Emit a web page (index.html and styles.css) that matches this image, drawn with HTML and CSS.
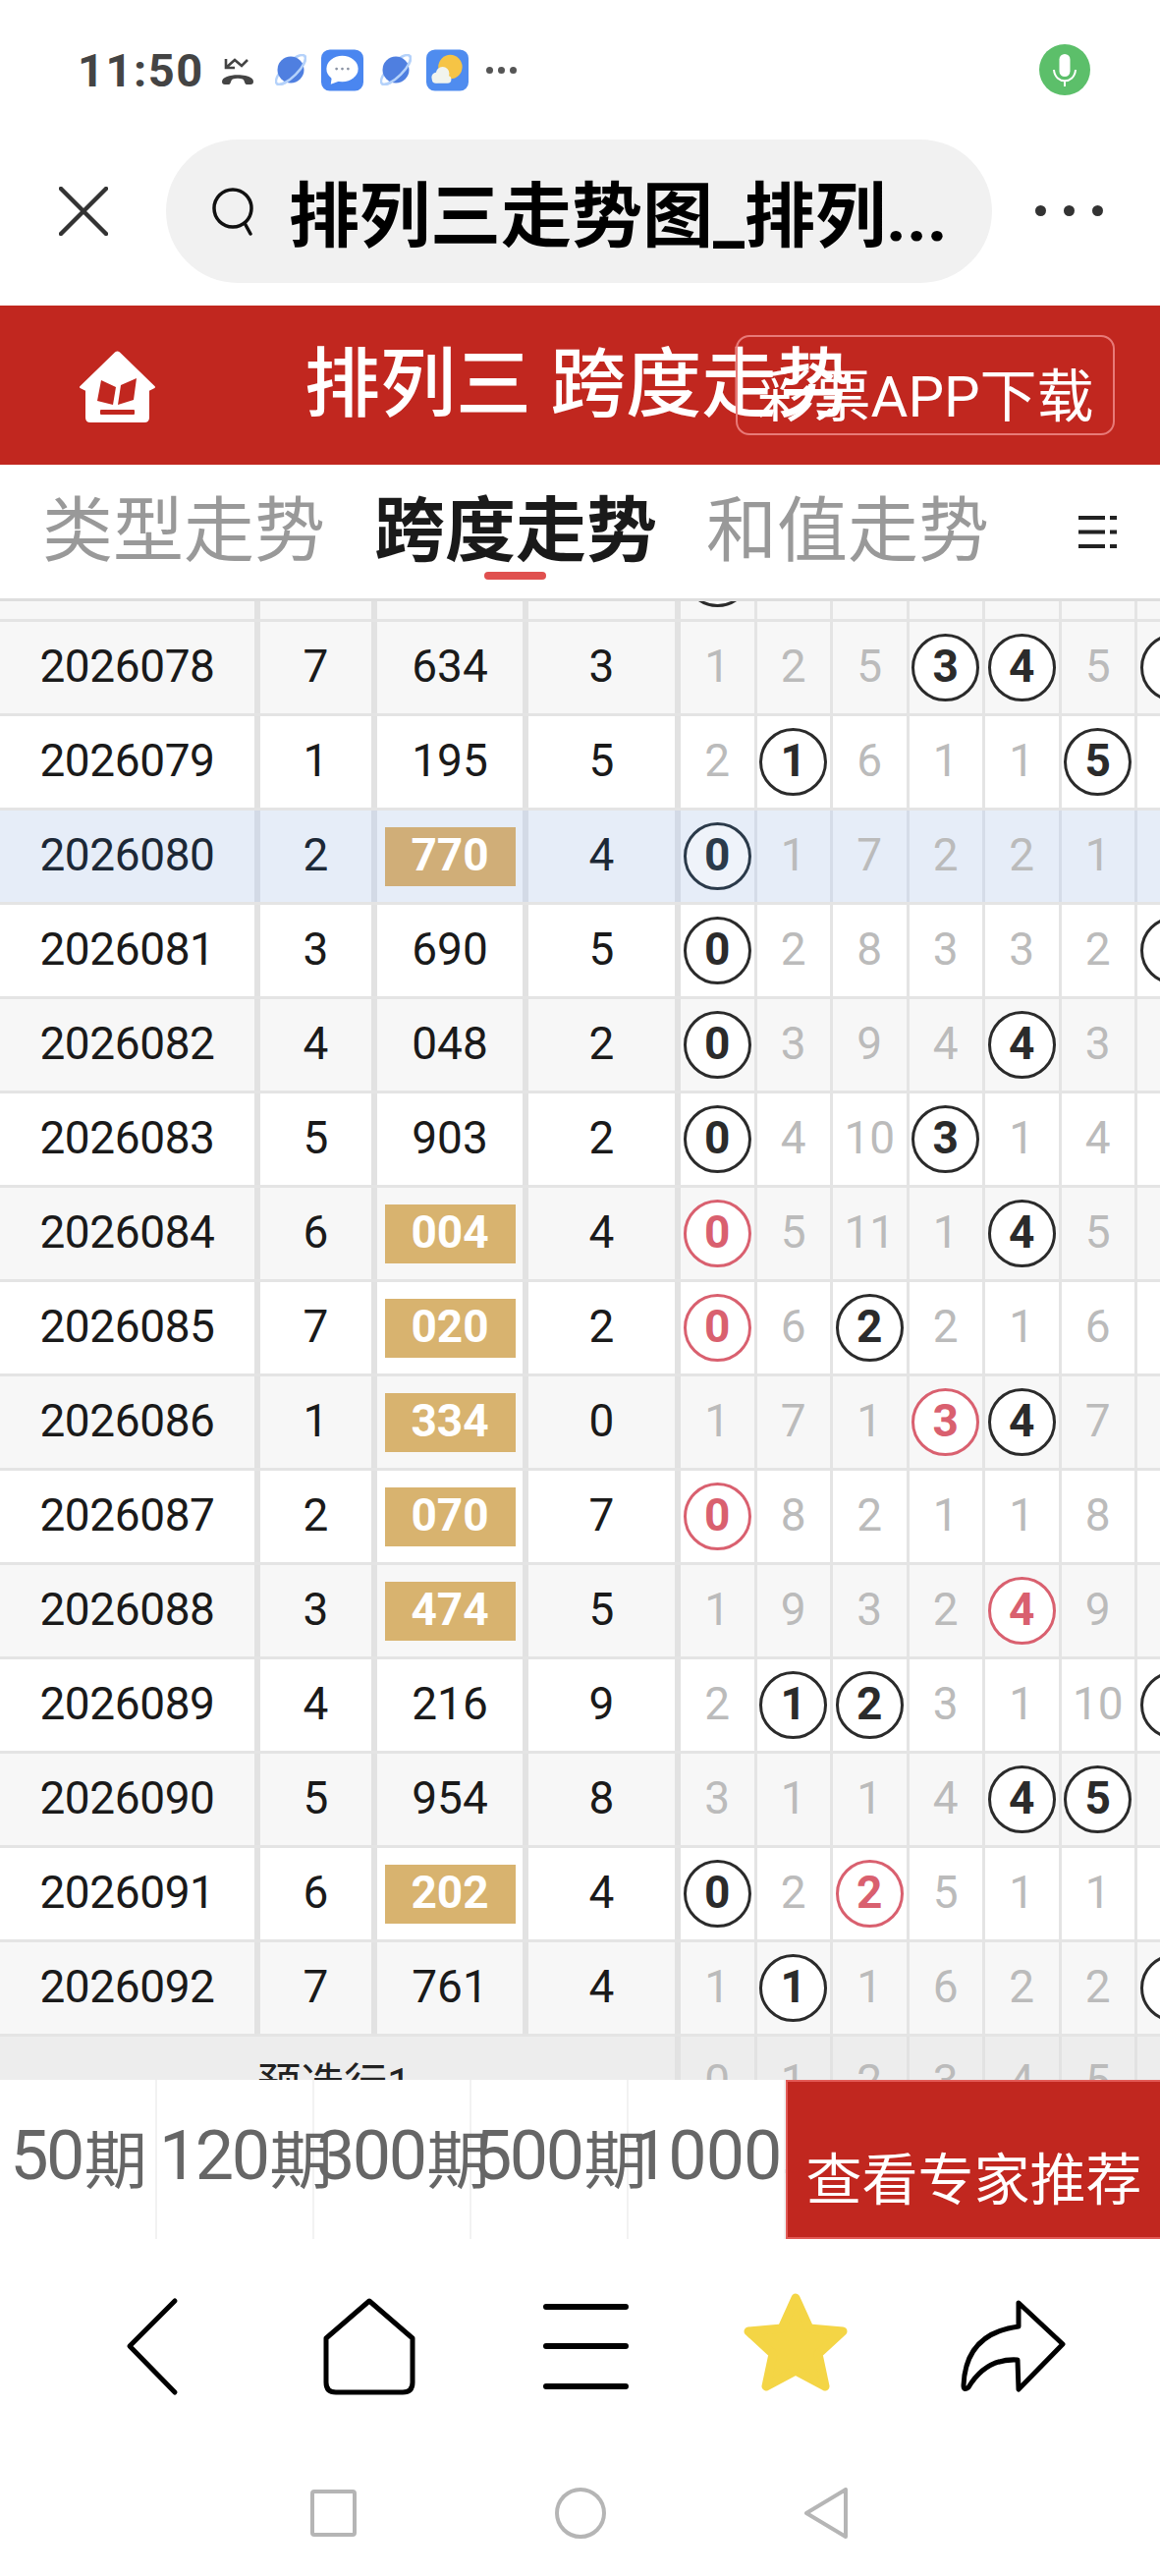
FILE: index.html
```html
<!DOCTYPE html>
<html lang="zh-CN">
<head>
<meta charset="utf-8">
<title>排列三 跨度走势</title>
<link rel="stylesheet" href="styles.css">
</head>
<body>
<div class="phone">
  <div class="status">
    <span class="clock">11:50</span>
    <svg class="si-call" viewBox="0 0 34 28"><path d="M7 2v9h9M7 11L16 3l7 6 6-6" transform="translate(-2 0)" fill="none" stroke="#444" stroke-width="2.600"/><path d="M1 25c0-9 32-9 32 0 0 2-1 3-3 3h-4c-2 0-2-5-4-5.500-3-1-7-1-10 0C10 23 10 28 8 28H4c-2 0-3-1-3-3z" fill="#444"/></svg>
    <svg class="si-planet" viewBox="0 0 32 32"><g transform="translate(16 16) rotate(-45)"><ellipse rx="20" ry="7" fill="none" stroke="#b5d2fa" stroke-width="2.500"/></g><circle cx="16" cy="16" r="13.500" fill="#4f7fe0"/><g transform="translate(16 16) rotate(-45)"><path d="M-20 0A20 7 0 0 0 20 0" fill="none" stroke="#b5d2fa" stroke-width="2.500"/></g></svg>
    <svg class="si-tile" viewBox="0 0 44 43"><rect width="44" height="43" rx="9" fill="#4a86f0"/><ellipse cx="22" cy="20" rx="16.500" ry="13.500" fill="#fff"/><path d="M11 29l-1 7 11-4z" fill="#fff"/><circle cx="16" cy="20" r="1.400" fill="#8b93a3"/><circle cx="22" cy="20" r="1.400" fill="#8b93a3"/><circle cx="28" cy="20" r="1.400" fill="#8b93a3"/></svg>
    <svg class="si-planet" viewBox="0 0 32 32"><g transform="translate(16 16) rotate(-45)"><ellipse rx="20" ry="7" fill="none" stroke="#b5d2fa" stroke-width="2.500"/></g><circle cx="16" cy="16" r="13.500" fill="#4f7fe0"/><g transform="translate(16 16) rotate(-45)"><path d="M-20 0A20 7 0 0 0 20 0" fill="none" stroke="#b5d2fa" stroke-width="2.500"/></g></svg>
    <svg class="si-tile" viewBox="0 0 44 43"><rect width="44" height="43" rx="9" fill="#4f8cef"/><circle cx="25" cy="18" r="12.500" fill="#f6c445"/><circle cx="11" cy="29" r="5.500" fill="#f1f4ee"/><circle cx="17" cy="25" r="7" fill="#f1f4ee"/><rect x="6" y="27" width="20" height="8" rx="4" fill="#f1f4ee"/></svg>
    <span class="st-dots"><i></i><i></i><i></i></span>
    <svg class="si-mic" viewBox="0 0 52 52"><circle cx="26" cy="26" r="26" fill="#5cbf6a"/><rect x="20.500" y="10" width="11" height="23" rx="5.500" fill="#fff"/><path d="M15 26c1 15 21 15 22 0M26 37v6" fill="none" stroke="#fff" stroke-width="2"/></svg>
  </div>

  <div class="addr">
    <svg class="a-close" viewBox="0 0 50 50"><path d="M2 2l46 46M48 2L2 48" stroke="#333" stroke-width="4.500" stroke-linecap="round"/></svg>
    <div class="a-search">
      <svg class="a-glass" viewBox="0 0 46 50"><circle cx="22" cy="22" r="19" fill="none" stroke="#111" stroke-width="3.500"/><path d="M34 37l6 11" stroke="#111" stroke-width="3.500" stroke-linecap="round"/></svg>
      <span class="a-title">排列三走势图_排列...</span>
    </div>
    <span class="a-more"><i></i><i></i><i></i></span>
  </div>

  <header class="head">
    <svg class="h-logo" viewBox="0 0 120 100"><path d="M58 17L22 52l6 3v28q0 4 4 4h55q4 0 4-4V55l6-3L61 17q-1.500-1-3 0z" fill="#fff" stroke="#fff" stroke-width="2" stroke-linejoin="round"/><path d="M43 45l15 7-3 18-16-4zM63 50l16-7-3 22-16 5z" fill="#c1271f"/><rect x="42" y="75" width="35" height="5" rx="1" fill="#c1271f"/></svg>
    <h1 class="h-title">排列三 跨度走势</h1>
    <a class="h-app">彩票APP下载</a>
  </header>

  <nav class="tabs">
    <span class="tab">类型走势</span>
    <span class="tab on">跨度走势</span>
    <span class="tab">和值走势</span>
    <svg class="t-menu" viewBox="0 0 39 33"><path d="M0 2h27M32 2h7M0 16.500h27M32 16.500h7M0 31h27M32 31h7" stroke="#222" stroke-width="4"/></svg>
  </nav>

  <main class="table">
    <div class="row r-first alt"><span class="p"></span><span class="a"></span><span class="b"></span><span class="c"></span><span class="n"><b class="ball">0</b></span><span class="n"></span><span class="n"></span><span class="n"></span><span class="n"></span><span class="n"></span><span class="n"></span></div>
    <div class="row alt"><span class="p">2026078</span><span class="a">7</span><span class="b">634</span><span class="c">3</span><span class="n">1</span><span class="n">2</span><span class="n">5</span><span class="n"><b class="ball">3</b></span><span class="n"><b class="ball">4</b></span><span class="n">5</span><span class="n"><b class="ball">6</b></span></div>
    <div class="row"><span class="p">2026079</span><span class="a">1</span><span class="b">195</span><span class="c">5</span><span class="n">2</span><span class="n"><b class="ball">1</b></span><span class="n">6</span><span class="n">1</span><span class="n">1</span><span class="n"><b class="ball">5</b></span><span class="n">1</span></div>
    <div class="row hl"><span class="p">2026080</span><span class="a">2</span><span class="b"><em class="tag">770</em></span><span class="c">4</span><span class="n"><b class="ball">0</b></span><span class="n">1</span><span class="n">7</span><span class="n">2</span><span class="n">2</span><span class="n">1</span><span class="n">2</span></div>
    <div class="row"><span class="p">2026081</span><span class="a">3</span><span class="b">690</span><span class="c">5</span><span class="n"><b class="ball">0</b></span><span class="n">2</span><span class="n">8</span><span class="n">3</span><span class="n">3</span><span class="n">2</span><span class="n"><b class="ball">6</b></span></div>
    <div class="row alt"><span class="p">2026082</span><span class="a">4</span><span class="b">048</span><span class="c">2</span><span class="n"><b class="ball">0</b></span><span class="n">3</span><span class="n">9</span><span class="n">4</span><span class="n"><b class="ball">4</b></span><span class="n">3</span><span class="n">1</span></div>
    <div class="row"><span class="p">2026083</span><span class="a">5</span><span class="b">903</span><span class="c">2</span><span class="n"><b class="ball">0</b></span><span class="n">4</span><span class="n">10</span><span class="n"><b class="ball">3</b></span><span class="n">1</span><span class="n">4</span><span class="n">2</span></div>
    <div class="row alt"><span class="p">2026084</span><span class="a">6</span><span class="b"><em class="tag">004</em></span><span class="c">4</span><span class="n"><b class="ball red">0</b></span><span class="n">5</span><span class="n">11</span><span class="n">1</span><span class="n"><b class="ball">4</b></span><span class="n">5</span><span class="n">3</span></div>
    <div class="row"><span class="p">2026085</span><span class="a">7</span><span class="b"><em class="tag">020</em></span><span class="c">2</span><span class="n"><b class="ball red">0</b></span><span class="n">6</span><span class="n"><b class="ball">2</b></span><span class="n">2</span><span class="n">1</span><span class="n">6</span><span class="n">4</span></div>
    <div class="row alt"><span class="p">2026086</span><span class="a">1</span><span class="b"><em class="tag">334</em></span><span class="c">0</span><span class="n">1</span><span class="n">7</span><span class="n">1</span><span class="n"><b class="ball red">3</b></span><span class="n"><b class="ball">4</b></span><span class="n">7</span><span class="n">5</span></div>
    <div class="row"><span class="p">2026087</span><span class="a">2</span><span class="b"><em class="tag">070</em></span><span class="c">7</span><span class="n"><b class="ball red">0</b></span><span class="n">8</span><span class="n">2</span><span class="n">1</span><span class="n">1</span><span class="n">8</span><span class="n">6</span></div>
    <div class="row alt"><span class="p">2026088</span><span class="a">3</span><span class="b"><em class="tag">474</em></span><span class="c">5</span><span class="n">1</span><span class="n">9</span><span class="n">3</span><span class="n">2</span><span class="n"><b class="ball red">4</b></span><span class="n">9</span><span class="n">7</span></div>
    <div class="row"><span class="p">2026089</span><span class="a">4</span><span class="b">216</span><span class="c">9</span><span class="n">2</span><span class="n"><b class="ball">1</b></span><span class="n"><b class="ball">2</b></span><span class="n">3</span><span class="n">1</span><span class="n">10</span><span class="n"><b class="ball">9</b></span></div>
    <div class="row alt"><span class="p">2026090</span><span class="a">5</span><span class="b">954</span><span class="c">8</span><span class="n">3</span><span class="n">1</span><span class="n">1</span><span class="n">4</span><span class="n"><b class="ball">4</b></span><span class="n"><b class="ball">5</b></span><span class="n">1</span></div>
    <div class="row"><span class="p">2026091</span><span class="a">6</span><span class="b"><em class="tag">202</em></span><span class="c">4</span><span class="n"><b class="ball">0</b></span><span class="n">2</span><span class="n"><b class="ball red">2</b></span><span class="n">5</span><span class="n">1</span><span class="n">1</span><span class="n">2</span></div>
    <div class="row alt"><span class="p">2026092</span><span class="a">7</span><span class="b">761</span><span class="c">4</span><span class="n">1</span><span class="n"><b class="ball">1</b></span><span class="n">1</span><span class="n">6</span><span class="n">2</span><span class="n">2</span><span class="n"><b class="ball">6</b></span></div>
    <div class="row foot"><span class="f-label">预选行1</span><span class="n">0</span><span class="n">1</span><span class="n">2</span><span class="n">3</span><span class="n">4</span><span class="n">5</span><span class="n">6</span></div>
  </main>

  <div class="bar">
    <span class="bar-item">50<small>期</small></span>
    <span class="bar-item">120<small>期</small></span>
    <span class="bar-item">300<small>期</small></span>
    <span class="bar-item">500<small>期</small></span>
    <span class="bar-item bar-wide">1000<small>期</small></span>
    <a class="bar-cta">查看专家推荐</a>
  </div>

  <div class="tool">
    <svg class="tool-i" viewBox="0 0 221 110"><path d="M133 12L87 58l46 47" fill="none" stroke="#000" stroke-width="5" stroke-linecap="round" stroke-linejoin="round"/></svg>
    <svg class="tool-i" viewBox="0 0 221 110"><path d="M110 12L66 50v45q0 10 10 10h68q10 0 10-10V50z" fill="none" stroke="#000" stroke-width="5" stroke-linejoin="round"/></svg>
    <svg class="tool-i" viewBox="0 0 221 110"><path d="M69 18h81M69 58h81M69 99h81" stroke="#000" stroke-width="6" stroke-linecap="round"/></svg>
    <svg class="tool-i" viewBox="0 0 221 110"><path d="M102 9l14 31 34 3-25 23 7 33-30-16-30 16 7-33-25-23 34-3z" fill="#f4d545" stroke="#f4d545" stroke-width="9" stroke-linejoin="round"/></svg>
    <svg class="tool-i" viewBox="0 0 221 110"><path d="M108 14l45 42-45 46-1-30q-32-2-50 28-5 4-5-2 2-53 56-60z" fill="none" stroke="#000" stroke-width="5" stroke-linejoin="round"/></svg>
  </div>

  <div class="sys">
    <svg class="sys-sq" viewBox="0 0 47 48"><rect x="2" y="2" width="43" height="44" rx="2" fill="none" stroke="#b5b5b5" stroke-width="4"/></svg>
    <svg class="sys-ci" viewBox="0 0 52 52"><circle cx="26" cy="26" r="24" fill="none" stroke="#b5b5b5" stroke-width="4"/></svg>
    <svg class="sys-tr" viewBox="0 0 44 52"><path d="M42 2v48L2 26z" fill="none" stroke="#b5b5b5" stroke-width="4" stroke-linejoin="round"/></svg>
  </div>
</div>
</body>
</html>
```
FILE: styles.css
```css
* { box-sizing: border-box; }
html, body { margin: 0; padding: 0; background: #fff; }
body { font-family: Roboto, "Noto Sans CJK SC", sans-serif; }
.phone { width: 1181px; height: 2622px; overflow: hidden; display: flex; flex-direction: column; }

/* status bar */
.status { height: 142px; flex: none; display: flex; align-items: center; padding-left: 79px; }
.clock { font-size: 47px; font-weight: 700; color: #444; width: 146px; letter-spacing: 1.5px; }
.si-call { width: 34px; height: 28px; margin-top: 2px; }
.si-planet { width: 32px; height: 32px; }
.si-call + .si-planet { margin-left: 21px; }
.si-tile { width: 43px; height: 43px; margin-left: 15px; }
.si-tile + .si-planet { margin-left: 17px; }
.st-dots { display: flex; gap: 5px; margin-left: 18px; }
.st-dots i { width: 7px; height: 7px; border-radius: 50%; background: #555; }
.si-mic { width: 52px; height: 52px; margin-left: auto; margin-right: 71px; }

/* address bar */
.addr { height: 169px; flex: none; display: flex; align-items: flex-start; }
.a-close { width: 50px; height: 50px; margin: 48px 0 0 60px; flex: none; }
.a-search { width: 841px; height: 146px; margin-left: 59px; border-radius: 73px; background: #f1f1f1; display: flex; align-items: center; padding-left: 46px; flex: none; }
.a-glass { width: 46px; height: 50px; flex: none; }
.a-title { font-size: 72px; font-weight: 700; color: #000; margin-left: 33px; white-space: nowrap; padding-bottom: 4px; }
.a-more { display: flex; gap: 18px; margin: 67px 0 0 44px; }
.a-more i { width: 11px; height: 11px; border-radius: 50%; background: #333; }

/* red header */
.head { height: 162px; flex: none; background: #c1271f; display: grid; grid-template-columns: 310px auto 1fr; align-items: center; color: #fff; }
.h-logo { width: 120px; height: 100px; margin-left: 60px; }
.h-title { margin: 0; padding-bottom: 16px; font-size: 77px; font-weight: 500; white-space: nowrap; }
.h-app { margin: 0 46px 0 -119px; height: 102px; padding-top: 14px; border: 2px solid #e87a78; border-radius: 14px; font-size: 58px; display: flex; align-items: center; justify-content: center; white-space: nowrap; }

/* tabs */
.tabs { height: 136px; flex: none; display: flex; align-items: center; gap: 52px; padding-left: 43px; }
.tab { font-size: 72px; color: #999; white-space: nowrap; width: 286px; position: relative; line-height: 90px; }
.tab.on { color: #1a1a1a; font-weight: 700; }
.tab.on::after { content: ""; position: absolute; left: 112px; top: 86px; width: 63px; height: 8px; border-radius: 4px; background: #e0504f; }
.t-menu { width: 39px; height: 33px; margin-left: 41px; }

/* table */
.table { height: 1508px; flex: none; overflow: hidden; border-top: 3px solid #dedede; }
.row { height: 96px; display: flex; border-bottom: 3px solid #e4e4e4; background: #fff; font-size: 46px; color: #1a1a1a; }
.r-first { margin-top: -75px; }
.row.alt { background: #f7f7f7; }
.row.hl { background: #e6edf8; color: #1c2836; }
.row > span { display: flex; align-items: center; justify-content: center; flex: none; height: 100%; padding-bottom: 4px; }
.p { width: 265px; border-right: 6px solid #e2e2e2; letter-spacing: -0.4px; }
.a { width: 119px; border-right: 6px solid #e2e2e2; }
.b { width: 154px; border-right: 6px solid #e2e2e2; }
.c { width: 155px; border-right: 6px solid #e2e2e2; }
.n { width: 77.5px; border-right: 3px solid #e4e4e4; color: #bbb; }
.hl .n { border-right-color: #d5dce8; }
.hl .p, .hl .a, .hl .b, .hl .c { border-right-color: #d3dae6; }
.ball { width: 69px; height: 69px; flex: none; margin-top: 4px; padding-bottom: 4px; border-radius: 50%; border: 3px solid #2b2b2b; background: #fff; color: #2b2b2b; font-weight: 700; display: flex; align-items: center; justify-content: center; }
.hl .ball { background: #eff3fa; border-color: #2b3a4a; color: #2b3a4a; }
.ball.red { border-color: #d9606f; color: #d9606f; }
.tag { width: 133px; height: 60px; margin-top: 4px; padding-bottom: 4px; background: #d8b36f; color: #fff; font-style: normal; font-weight: 700; display: flex; align-items: center; justify-content: center; }
.hl .tag { background: #d0ae78; }
.foot { background: #ededed; color: #222; }
.foot .n { border-right-color: #e2e2e2; color: #bbb; }
.f-label { width: 693px; font-size: 44px; padding-right: 6px; border-right: 6px solid #e2e2e2; }

/* bottom bar */
.bar { height: 162px; flex: none; display: flex; background: #fff; }
.bar-item { width: 160px; flex: none; display: flex; align-items: center; justify-content: safe center; font-size: 70px; color: #666; letter-spacing: -2.500px; white-space: nowrap; border-right: 2px solid #f2f2f2; padding: 0 0 8px 2px; }
.bar-item small { font-size: 64px; margin-left: 2px; letter-spacing: 0; }
.bar-wide { letter-spacing: -1px; }
.bar-cta { width: 381px; flex: none; background: #c1271f; border: 2px solid #e25a56; border-right: 0; color: #fff; font-size: 57px; display: flex; align-items: center; justify-content: center; padding-top: 32px; white-space: nowrap; position: relative; }

/* toolbar + system nav */
.tool { flex: none; display: flex; padding: 51px 0 0 45px; }
.tool-i { width: 221px; height: 110px; flex: none; }
.sys { flex: none; display: flex; align-items: center; gap: 202px; padding: 92px 0 0 316px; }
.sys-sq { width: 47px; height: 48px; }
.sys-ci { width: 52px; height: 52px; }
.sys-tr { width: 44px; height: 52px; }
```
